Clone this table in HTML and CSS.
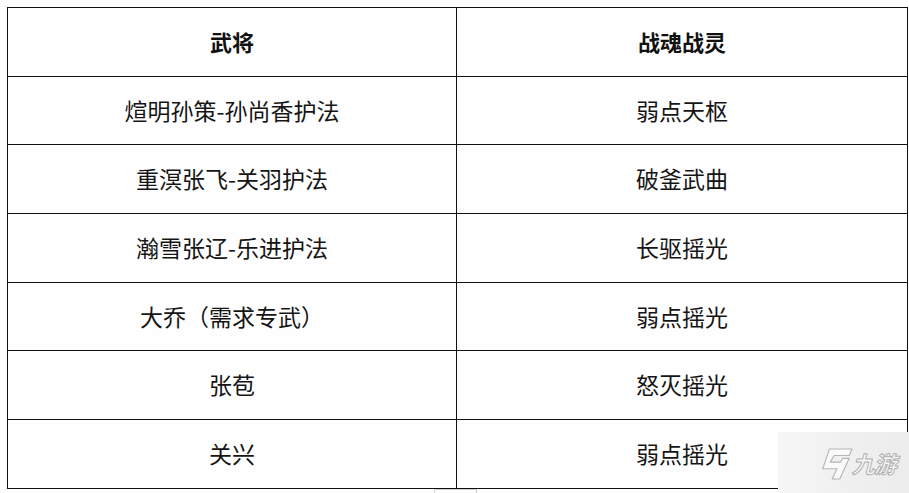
FILE: index.html
```html
<!DOCTYPE html>
<html lang="zh-CN">
<head>
<meta charset="utf-8">
<title>武将 战魂战灵</title>
<link rel="stylesheet" href="styles.css">
</head>
<body>
<table class="grid">
  <colgroup><col class="c1"><col class="c2"></colgroup>
  <thead>
    <tr><th>武将</th><th>战魂战灵</th></tr>
  </thead>
  <tbody>
    <tr><td>煊明孙策-孙尚香护法</td><td>弱点天枢</td></tr>
    <tr><td>重溟张飞-关羽护法</td><td>破釜武曲</td></tr>
    <tr><td>瀚雪张辽-乐进护法</td><td>长驱摇光</td></tr>
    <tr><td>大乔（需求专武）</td><td>弱点摇光</td></tr>
    <tr><td>张苞</td><td>怒灭摇光</td></tr>
    <tr><td>关兴</td><td>弱点摇光</td></tr>
  </tbody>
</table>
<div class="stub"></div>
<div class="watermark">
  <svg class="wm-logo" viewBox="0 0 38 34" width="36" height="32">
    <path d="M12 1 H36 L33 8 H17 L13 15 H24 L26 11 H33 L23 33 H15 L20 22 H5 Z" fill="#fafafa" stroke="#b5b5b5" stroke-width="1.2" stroke-linejoin="round"/>
  </svg>
  <span class="wm-text">九游</span>
</div>
</body>
</html>
```
FILE: styles.css
```css
html, body {
  margin: 0;
  padding: 0;
  background: #fefefe;
}
body {
  position: relative;
  width: 909px;
  height: 493px;
  overflow: hidden;
  font-family: "Noto Sans CJK SC", "Noto Sans", sans-serif;
  color: #151515;
}
.grid {
  margin: 7px 0 0 7px;
  width: 900px;
  border-collapse: collapse;
  table-layout: fixed;
}
.grid .c1 { width: 449px; }
.grid .c2 { width: 451px; }
.grid th, .grid td {
  border: 1px solid #111;
  height: 68.7px;
  padding: 0 0 1px 0;
  box-sizing: border-box;
  text-align: center;
  vertical-align: middle;
  font-size: 23px;
  line-height: 1;
}
.grid th {
  font-weight: 700;
  font-size: 22px;
  color: #111;
}
.grid td { font-weight: 400; }
.stub {
  position: absolute;
  left: 434px;
  top: 489px;
  width: 43px;
  height: 10px;
  border: 1px solid #cfcfcf;
  border-bottom: none;
  box-sizing: border-box;
}
.watermark {
  position: absolute;
  right: 0;
  bottom: 0;
  width: 131px;
  height: 61px;
  background: linear-gradient(90deg, #f6f6f6 0%, #efefef 60%, #ececec 100%);
  display: flex;
  align-items: center;
  padding-left: 40px;
  box-sizing: border-box;
}
.wm-logo { flex: none; margin-top: 2px; }
.wm-text {
  font-family: "Noto Sans CJK SC", sans-serif;
  font-size: 23px;
  font-weight: 700;
  letter-spacing: -1px;
  color: #f8f8f8;
  -webkit-text-stroke: 1px #b0b0b0;
  transform: skewX(-14deg);
  line-height: 1;
  white-space: nowrap;
  margin-top: 2px;
}
```
